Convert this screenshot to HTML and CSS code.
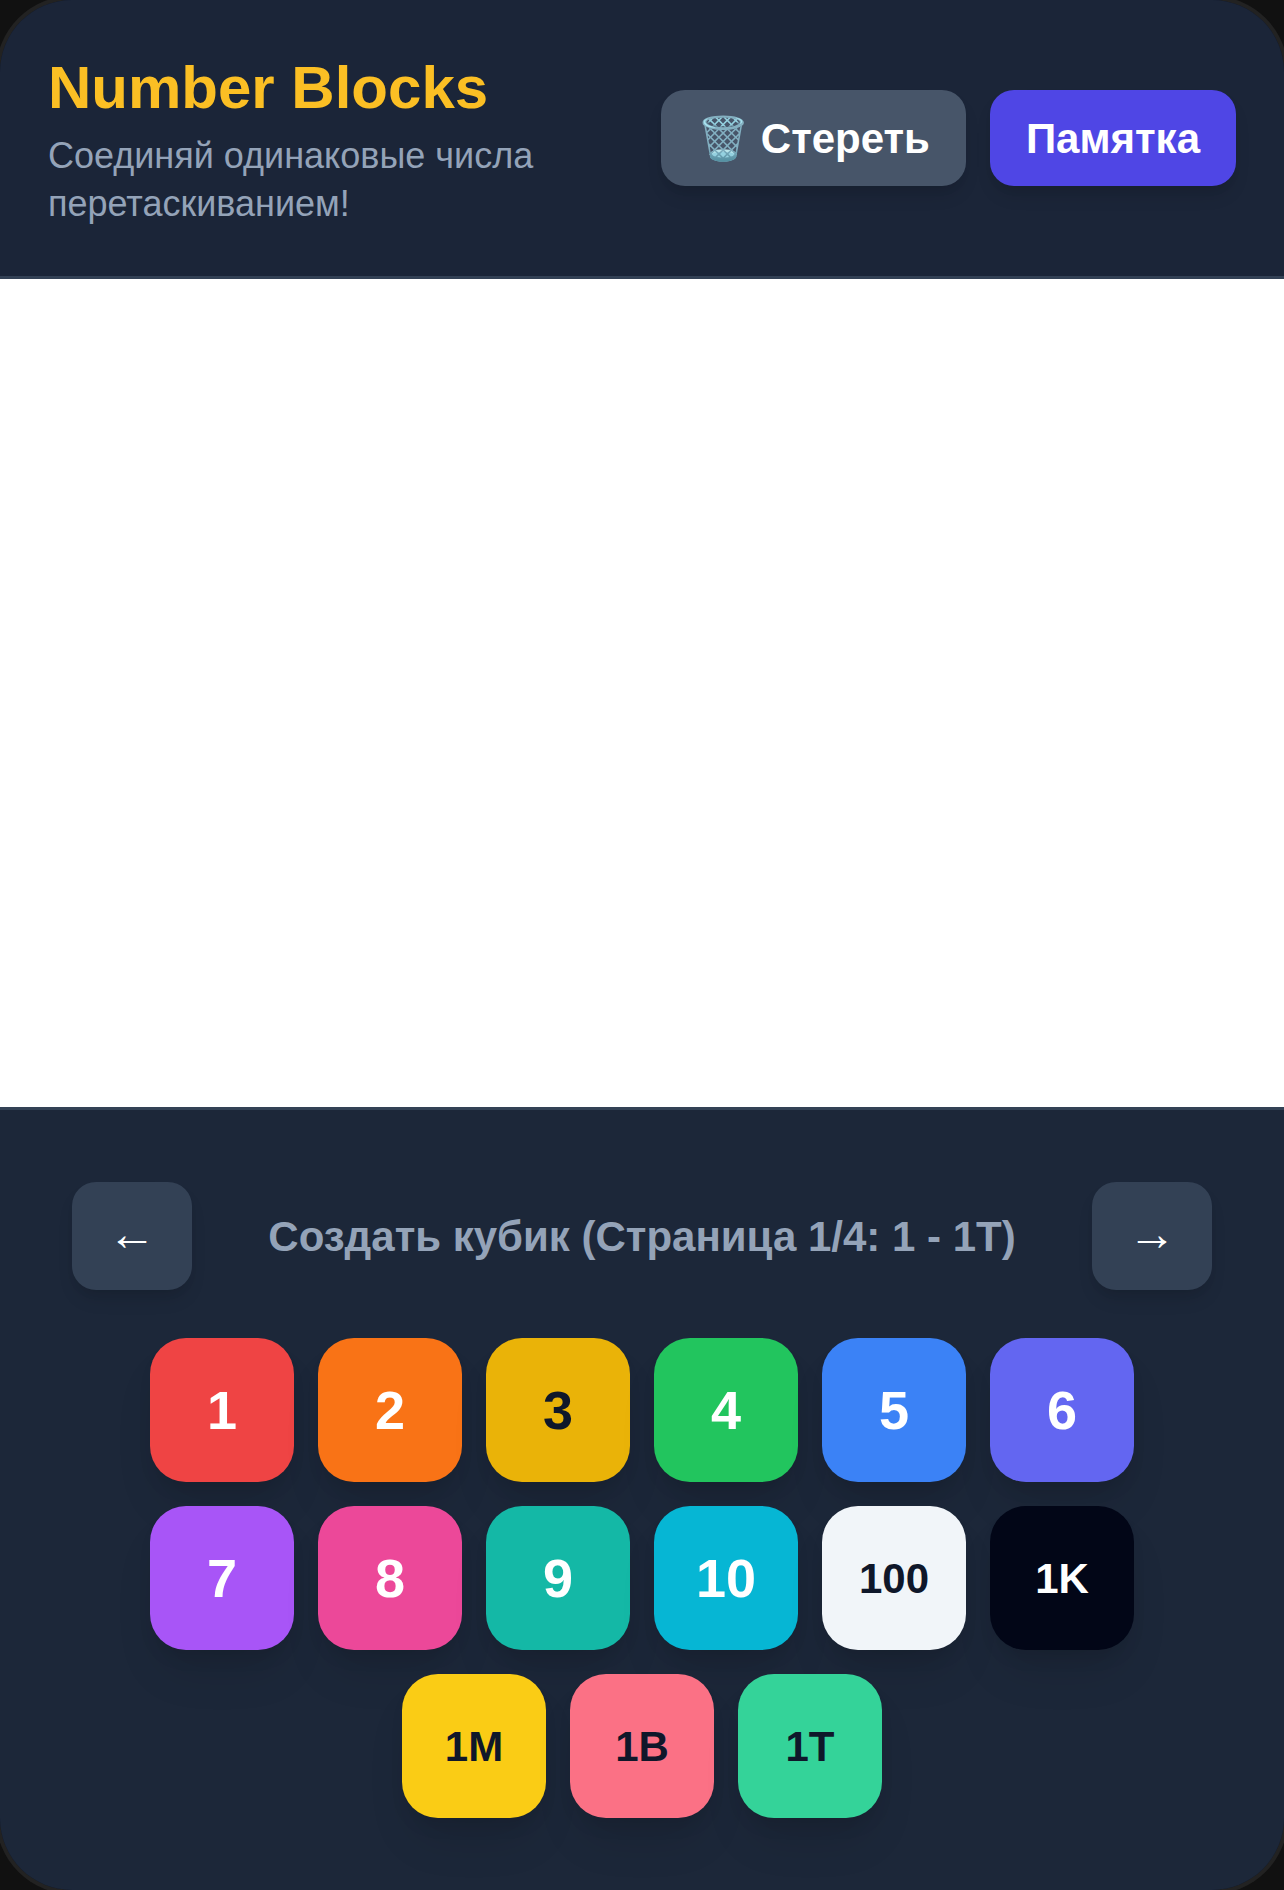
FILE: index.html
```html
<!DOCTYPE html>
<html lang="ru">
<head>
<meta charset="utf-8">
<meta name="viewport" content="width=device-width, initial-scale=1">
<title>Number Blocks</title>
<link rel="stylesheet" href="styles.css">
</head>
<body>
<div class="app">
  <header class="header">
    <div class="intro">
      <h1 class="title">Number Blocks</h1>
      <p class="subtitle">Соединяй одинаковые числа перетаскиванием!</p>
    </div>
    <div class="actions">
      <button type="button" class="action action-clear">🗑️ Стереть</button>
      <button type="button" class="action action-help">Памятка</button>
    </div>
  </header>
  <main class="field"></main>
  <section class="panel">
    <div class="pager">
      <button type="button" class="arrow" aria-label="Предыдущая страница">←</button>
      <h2 class="page-name">Создать кубик (Страница 1/4: 1 - 1T)</h2>
      <button type="button" class="arrow" aria-label="Следующая страница">→</button>
    </div>
    <div class="blocks">
      <button type="button" class="block red">1</button>
      <button type="button" class="block orange">2</button>
      <button type="button" class="block amber dark">3</button>
      <button type="button" class="block green">4</button>
      <button type="button" class="block blue">5</button>
      <button type="button" class="block indigo">6</button>
      <button type="button" class="block purple">7</button>
      <button type="button" class="block pink">8</button>
      <button type="button" class="block teal">9</button>
      <button type="button" class="block cyan">10</button>
      <button type="button" class="block small white dark">100</button>
      <button type="button" class="block small black">1K</button>
      <button type="button" class="block small yellow dark">1M</button>
      <button type="button" class="block small rose dark">1B</button>
      <button type="button" class="block small emerald dark">1T</button>
    </div>
  </section>
</div>
</body>
</html>
```
FILE: styles.css
```css
* { box-sizing: border-box; }

body {
  margin: 0;
  overflow: hidden;
  background: #111111;
  font-family: "Liberation Sans", Arial, sans-serif;
}

h1, h2, p { margin: 0; }

button {
  border: 0;
  color: #ffffff;
  font-family: inherit;
  font-weight: 700;
  cursor: pointer;
}

.app {
  display: flex;
  flex-direction: column;
  min-height: 100vh;
  border-radius: 72px;
  overflow: hidden;
  background: #0f172a;
  box-shadow: 0 0 0 4px #222222;
}

.header {
  display: flex;
  align-items: center;
  justify-content: space-between;
  gap: 24px;
  padding: 48px;
  border-bottom: 3px solid #334155;
  background: #1b2538;
}

.title {
  margin-bottom: 4px;
  color: #fbbf24;
  font-size: 60px;
  line-height: 80px;
}

.subtitle {
  color: #94a3b8;
  font-size: 36px;
  line-height: 48px;
}

.actions {
  display: flex;
  flex-shrink: 0;
  gap: 24px;
}

.action {
  height: 96px;
  padding: 0 36px;
  border-radius: 24px;
  font-size: 42px;
  line-height: 63px;
  white-space: nowrap;
  box-shadow: 0 12px 18px -3px rgba(0, 0, 0, 0.1), 0 6px 12px -6px rgba(0, 0, 0, 0.1);
}

.action-clear { background: #475569; }
.action-help { background: #4f46e5; }

.field {
  flex: 1;
  background: #ffffff;
}

.panel {
  display: flex;
  flex-direction: column;
  gap: 48px;
  padding: 72px;
  border-top: 3px solid #334155;
  background: #1c2739;
}

.pager {
  display: flex;
  align-items: center;
  justify-content: space-between;
}

.page-name {
  color: #94a3b8;
  font-size: 42px;
  line-height: 63px;
  text-align: center;
}

.arrow {
  width: 120px;
  height: 108px;
  padding: 0 0 4px;
  border-radius: 24px;
  background: #334155;
  font-size: 48px;
  line-height: 60px;
  box-shadow: 0 12px 18px -3px rgba(0, 0, 0, 0.1), 0 6px 12px -6px rgba(0, 0, 0, 0.1);
}

.blocks {
  display: flex;
  flex-wrap: wrap;
  justify-content: center;
  gap: 24px;
}

.block {
  width: 144px;
  height: 144px;
  padding: 0;
  border-radius: 36px;
  font-size: 54px;
  line-height: 81px;
  box-shadow: 0 30px 45px -9px rgba(0, 0, 0, 0.1), 0 12px 18px -6px rgba(0, 0, 0, 0.1);
}

.small {
  font-size: 42px;
  line-height: 63px;
}

.dark { color: #0f172a; }

.red { background: #ef4444; }
.orange { background: #f97316; }
.amber { background: #eab308; }
.green { background: #22c55e; }
.blue { background: #3b82f6; }
.indigo { background: #6366f1; }
.purple { background: #a855f7; }
.pink { background: #ec4899; }
.teal { background: #14b8a6; }
.cyan { background: #06b6d4; }
.white { background: #f1f5f9; }
.black { background: #020617; }
.yellow { background: #facc15; }
.rose { background: #fb7185; }
.emerald { background: #34d399; }
```
